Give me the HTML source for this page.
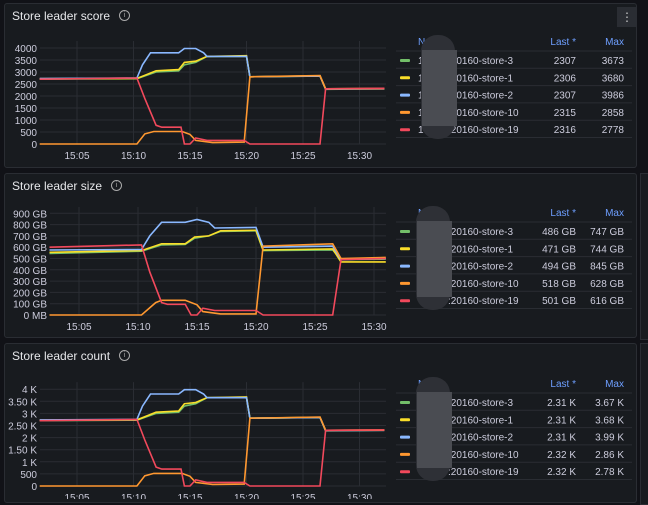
<!DOCTYPE html>
<html><head><meta charset="utf-8"><style>
body{margin:0;width:648px;height:499px;background:#111217;overflow:hidden;font-family:"Liberation Sans",sans-serif;position:relative}
.p{position:absolute;left:4px;width:633px;background:#181b1f;border:1px solid #2a2d33;border-radius:3px;box-sizing:border-box}
.t{position:absolute;left:7px;top:5px;color:#e6e7ea;font-size:12px}
.i{position:absolute;top:6px;width:9px;height:9px;border:1px solid #aaa;border-radius:50%;color:#aaa;font-size:7px;line-height:9px;text-align:center}
.side{position:absolute;left:640px;width:8px;background:#181b1f;border:1px solid #2a2d33}
svg{position:absolute;left:0;top:0}
</style></head><body>
<div class="p" style="top:3px;height:165px"><div class="t">Store leader score</div><div class="i" style="left:114px">i</div>
<div style="position:absolute;left:612px;top:3px;width:20px;height:20px;background:#2a2d33;color:#ccc;font-size:12px;text-align:center;line-height:20px">⋮</div></div>
<div class="p" style="top:173px;height:165px"><div class="t">Store leader size</div><div class="i" style="left:106px">i</div></div>
<div class="p" style="top:343px;height:160px"><div class="t">Store leader count</div><div class="i" style="left:114px">i</div></div>
<div class="side" style="top:173px;height:165px"></div><div class="side" style="top:343px;height:160px"></div>
<svg id="s" width="648" height="499" font-family="Liberation Sans, sans-serif"></svg>
<script>
const s=document.getElementById('s');let h='';
const C=['#73bf69','#fade2a','#8ab8ff','#ff9830','#f2495c'];
const names=['20160-store-3','20160-store-1','20160-store-2','20160-store-10','20160-store-19'];
function chart(o){
 for(let k=0;k<o.yl.length;k++){let y=o.y0-k*o.ys;h+=`<line x1="${o.px}" x2="386" y1="${y}" y2="${y}" stroke="#2a2d33"/>`;
  h+=`<text x="${o.px-3}" y="${y+4}" fill="#ccccdc" font-size="10" text-anchor="end">${o.yl[k]}</text>`;}
 for(let m=5;m<=30;m+=5){let x=o.x0+o.xs*m;h+=`<line x1="${x}" x2="${x}" y1="${o.y0-o.yl.length*o.ys+5}" y2="${o.y0}" stroke="#2a2d33"/>`;
  h+=`<text x="${x}" y="${o.y0+15}" fill="#ccccdc" font-size="10" text-anchor="middle">15:${m<10?'0'+m:m}</text>`;}
 o.lines.forEach((L,i)=>{let pts=L.map(p=>[(o.x0+o.xs*p[0]).toFixed(1),(o.y0-p[1]*o.vs).toFixed(1)].join(',')).join(' ');
  h+=`<polyline points="${pts}" fill="none" stroke="${C[i]}" stroke-width="1.6"/>`;});
 let ly=o.ly;h+=`<text x="418" y="${ly}" fill="#6e9fff" font-size="10">Na</text><text x="576" y="${ly}" fill="#6e9fff" font-size="10" text-anchor="end">Last *</text><text x="624" y="${ly}" fill="#6e9fff" font-size="10" text-anchor="end">Max</text>`;
 for(let r=0;r<5;r++){let y=ly+19+r*17.3;h+=`<line x1="396" x2="632" y1="${y-13}" y2="${y-13}" stroke="#2a2d33"/>`;
  h+=`<rect x="400" y="${y-5}" width="10" height="3" rx="1" fill="${C[r]}"/>`;
  if(o.one)h+=`<text x="418" y="${y}" fill="#ccccdc" font-size="10">1</text>`;
  h+=`<text x="448" y="${y}" fill="#ccccdc" font-size="10">:${names[r]}</text>`;
  h+=`<text x="576" y="${y}" fill="#ccccdc" font-size="10" text-anchor="end">${o.last[r]}</text><text x="624" y="${y}" fill="#ccccdc" font-size="10" text-anchor="end">${o.max[r]}</text>`;}
 h+=`<line x1="396" x2="632" y1="${ly+19+5*17.3-13}" y2="${ly+19+5*17.3-13}" stroke="#2a2d33"/>`;
 h+=`<rect x="${o.bx}" y="${ly-10}" width="34" height="104" rx="16" fill="#2e3036"/>`;
 h+=`<rect x="${o.bx+1}" y="${ly+5}" width="35" height="76" fill="#4a4c52"/>`;
}
const sc=[
 [[1.7,2700],[10.3,2720],[12,3000],[14,3050],[14.5,3300],[15.5,3400],[16.5,3650],[20,3650],[20.3,2800],[26.5,2830],[27,2280],[32.2,2300]],
 [[1.7,2720],[10.3,2730],[12,3050],[14,3100],[14.5,3400],[15.5,3450],[16.5,3650],[20,3680],[20.3,2800],[26.5,2840],[27,2300],[32.2,2310]],
 [[1.7,2730],[10.3,2750],[10.8,3300],[11.5,3800],[14,3800],[14.5,3980],[15.5,3980],[16.2,3800],[16.5,3650],[20,3650],[20.3,2800],[26.5,2830],[27,2290],[32.2,2300]],
 [[1.7,0],[10.3,0],[11,420],[11.8,520],[14.3,520],[15,400],[15.5,150],[17,60],[19.8,80],[20.3,2800],[26.5,2850],[27,2300],[32.2,2310]],
 [[1.7,2700],[10.3,2750],[11,1900],[12,780],[12.5,700],[14.2,700],[14.5,0],[15,0],[15.5,250],[16.5,150],[19.8,150],[20.3,0],[26.5,0],[27,2300],[32.2,2320]]];
chart({px:40,x0:20.5,xs:11.3,y0:144,ys:12,vs:0.024,yl:['0','500','1000','1500','2000','2500','3000','3500','4000'],lines:sc,ly:45,one:1,
 last:['2307','2306','2307','2315','2316'],max:['3673','3680','3986','2858','2778'],bx:421});
const sz=[
 [[2.5,545],[10.3,565],[12,620],[14,625],[14.8,680],[16,700],[17,740],[20,745],[20.6,570],[26.5,575],[27.2,490],[31,495]],
 [[2.5,555],[10.3,570],[12,630],[14,630],[14.8,690],[16,700],[17,745],[20,750],[20.6,575],[26.5,585],[27.2,470],[31,470]],
 [[2.5,575],[10.3,580],[11,700],[12,820],[14,820],[15,845],[16,820],[16.5,770],[20,775],[20.6,600],[26.5,610],[27.2,490],[31,500]],
 [[2.5,0],[10.3,0],[11.5,110],[12,130],[14,130],[15,90],[15.5,30],[17,10],[20,10],[20.6,610],[26.5,630],[27.2,500],[31,510]],
 [[2.5,600],[10.3,620],[11,380],[12,110],[12.5,95],[14,95],[14.5,0],[15,0],[15.5,60],[16.5,40],[20,40],[20.6,0],[26.5,0],[27.2,490],[31,500]]];
chart({px:50,x0:20,xs:11.8,y0:315,ys:11.3,vs:0.113,yl:['0 MB','100 GB','200 GB','300 GB','400 GB','500 GB','600 GB','700 GB','800 GB','900 GB'],lines:sz,ly:216,
 last:['486 GB','471 GB','494 GB','518 GB','501 GB'],max:['747 GB','744 GB','845 GB','628 GB','616 GB'],bx:416});
chart({px:40,x0:20.5,xs:11.3,y0:486,ys:12.1,vs:0.0242,yl:['0','500','1 K','1.50 K','2 K','2.50 K','3 K','3.50 K','4 K'],lines:sc,ly:387,
 last:['2.31 K','2.31 K','2.31 K','2.32 K','2.32 K'],max:['3.67 K','3.68 K','3.99 K','2.86 K','2.78 K'],bx:416});
s.innerHTML=h;
</script>
</body></html>
